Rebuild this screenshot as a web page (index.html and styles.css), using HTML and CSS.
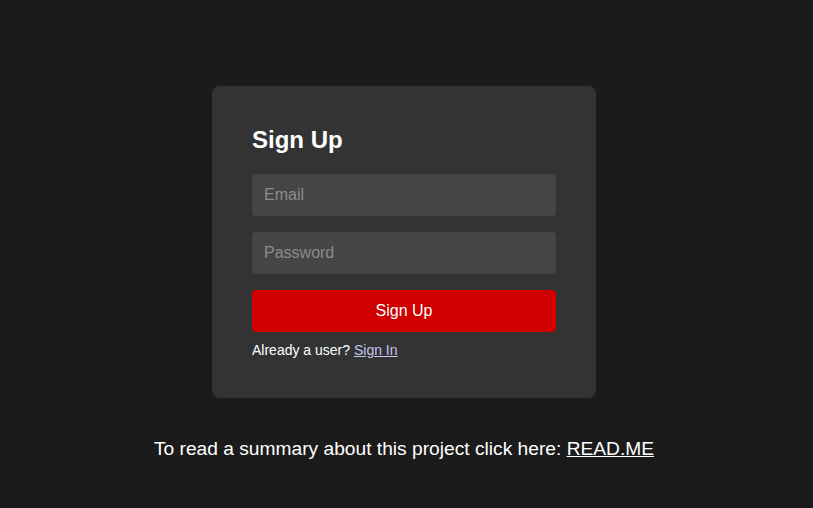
FILE: index.html
```html
<!DOCTYPE html>
<html lang="en">
<head>
<meta charset="utf-8">
<title>Sign Up</title>
<link rel="stylesheet" href="styles.css">
</head>
<body>
<main class="page">
  <form class="card">
    <h1 class="title">Sign Up</h1>
    <input class="field" type="email" placeholder="Email">
    <input class="field" type="password" placeholder="Password">
    <button class="btn" type="button">Sign Up</button>
    <p class="switch">Already a user? <a href="#" class="link">Sign In</a></p>
  </form>
  <p class="note">To read a summary about this project click here: <a href="#" class="readme">READ.ME</a></p>
</main>
</body>
</html>
```

FILE: styles.css
```css
* { box-sizing: border-box; }
html, body {
  margin: 0;
  padding: 0;
  background: #1b1b1b;
  height: 100%;
}
body {
  font-family: "Liberation Sans", Arial, sans-serif;
  color: #fff;
}
.page {
  display: flex;
  flex-direction: column;
  align-items: center;
  padding: 86px 5px 0 0;
}
.card {
  width: 384px;
  background: #333333;
  border-radius: 8px;
  padding: 40px;
  display: flex;
  flex-direction: column;
}
.title {
  margin: 0 0 20px;
  font-size: 24px;
  font-weight: 700;
  line-height: 28px;
  color: #fff;
}
.field {
  height: 42px;
  margin: 0 0 16px;
  border: none;
  border-radius: 4px;
  background: #454545;
  padding: 0 12px;
  font-family: inherit;
  font-size: 16px;
  color: #fff;
  outline: none;
}
.field::placeholder { color: #8c8c8c; }
.btn {
  height: 42px;
  border: none;
  border-radius: 4px;
  background: #d00000;
  color: #fff;
  font-family: inherit;
  font-size: 16px;
  cursor: pointer;
}
.switch {
  margin: 10px 0 0;
  font-size: 14px;
  line-height: 16px;
  color: #fff;
}
.link { color: #c5c5ee; text-decoration: underline; }
.note {
  margin: 39px 0 0;
  font-size: 19.2px;
  line-height: 23px;
  color: #fff;
}
.readme { color: #fff; text-decoration: underline; }
```
